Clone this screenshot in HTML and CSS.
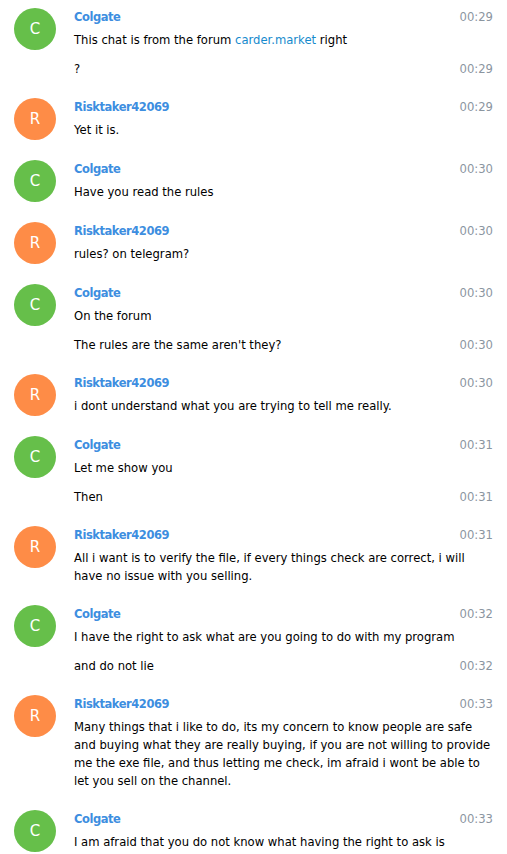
FILE: index.html
```html
<!DOCTYPE html>
<html>
<head>
<meta charset="utf-8">
<link rel="stylesheet" href="styles.css">
</head>
<body>
<div class="chat">
  <div class="group">
    <div class="avatar green">C</div>
    <div class="body">
      <div class="head"><span class="name">Colgate</span><span class="time">00:29</span></div>
      <div class="msg"><span class="text">This chat is from the forum <span class="link">carder.market</span> right</span></div>
      <div class="msg cont"><span class="text">?</span><span class="time">00:29</span></div>
    </div>
  </div>
  <div class="group">
    <div class="avatar orange">R</div>
    <div class="body">
      <div class="head"><span class="name">Risktaker42069</span><span class="time">00:29</span></div>
      <div class="msg"><span class="text">Yet it is.</span></div>
    </div>
  </div>
  <div class="group">
    <div class="avatar green">C</div>
    <div class="body">
      <div class="head"><span class="name">Colgate</span><span class="time">00:30</span></div>
      <div class="msg"><span class="text">Have you read the rules</span></div>
    </div>
  </div>
  <div class="group">
    <div class="avatar orange">R</div>
    <div class="body">
      <div class="head"><span class="name">Risktaker42069</span><span class="time">00:30</span></div>
      <div class="msg"><span class="text">rules? on telegram?</span></div>
    </div>
  </div>
  <div class="group">
    <div class="avatar green">C</div>
    <div class="body">
      <div class="head"><span class="name">Colgate</span><span class="time">00:30</span></div>
      <div class="msg"><span class="text">On the forum</span></div>
      <div class="msg cont"><span class="text">The rules are the same aren't they?</span><span class="time">00:30</span></div>
    </div>
  </div>
  <div class="group">
    <div class="avatar orange">R</div>
    <div class="body">
      <div class="head"><span class="name">Risktaker42069</span><span class="time">00:30</span></div>
      <div class="msg"><span class="text">i dont understand what you are trying to tell me really.</span></div>
    </div>
  </div>
  <div class="group">
    <div class="avatar green">C</div>
    <div class="body">
      <div class="head"><span class="name">Colgate</span><span class="time">00:31</span></div>
      <div class="msg"><span class="text">Let me show you</span></div>
      <div class="msg cont"><span class="text">Then</span><span class="time">00:31</span></div>
    </div>
  </div>
  <div class="group">
    <div class="avatar orange">R</div>
    <div class="body">
      <div class="head"><span class="name">Risktaker42069</span><span class="time">00:31</span></div>
      <div class="msg"><span class="text">All i want is to verify the file, if every things check are correct, i will have no issue with you selling.</span></div>
    </div>
  </div>
  <div class="group">
    <div class="avatar green">C</div>
    <div class="body">
      <div class="head"><span class="name">Colgate</span><span class="time">00:32</span></div>
      <div class="msg"><span class="text">I have the right to ask what are you going to do with my program</span></div>
      <div class="msg cont"><span class="text">and do not lie</span><span class="time">00:32</span></div>
    </div>
  </div>
  <div class="group">
    <div class="avatar orange">R</div>
    <div class="body">
      <div class="head"><span class="name">Risktaker42069</span><span class="time">00:33</span></div>
      <div class="msg"><span class="text">Many things that i like to do, its my concern to know people are safe and buying what they are really buying, if you are not willing to provide me the exe file, and thus letting me check, im afraid i wont be able to let you sell on the channel.</span></div>
    </div>
  </div>
  <div class="group">
    <div class="avatar green">C</div>
    <div class="body">
      <div class="head"><span class="name">Colgate</span><span class="time">00:33</span></div>
      <div class="msg"><span class="text">I am afraid that you do not know what having the right to ask is</span></div>
    </div>
  </div>
</div>
</body>
</html>
```

FILE: styles.css
```css
html, body {
  margin: 0;
  padding: 0;
  background: #ffffff;
}
body {
  font-family: "DejaVu Sans", Verdana, sans-serif;
  font-size: 11.6px;
  color: #000000;
  overflow: hidden;
}
.chat {
  display: flex;
  flex-direction: column;
  padding: 0 14px 0 14px;
}
.group {
  display: flex;
  align-items: flex-start;
  gap: 18px;
  padding: 8px 0 12px 0;
}
.avatar {
  flex: 0 0 42px;
  width: 42px;
  height: 42px;
  border-radius: 50%;
  color: #ffffff;
  font-size: 15px;
  line-height: 42px;
  text-align: center;
}
.green { background: #66bf4a; }
.orange { background: #fe8c47; }
.body {
  flex: 1;
  min-width: 0;
  display: flex;
  flex-direction: column;
}
.head, .msg {
  display: flex;
  justify-content: space-between;
  align-items: flex-start;
  line-height: 18px;
  gap: 10px;
}
.msg { margin-top: 5px; }
.msg.cont { margin-top: 11px; }
.name {
  color: #3d8ee0;
  font-weight: bold;
  font-size: 11.5px;
  letter-spacing: -0.45px;
}
.time {
  color: #8b959f;
  flex: 0 0 auto;
}
.text { flex: 1; }
.link { color: #168acd; }
```
